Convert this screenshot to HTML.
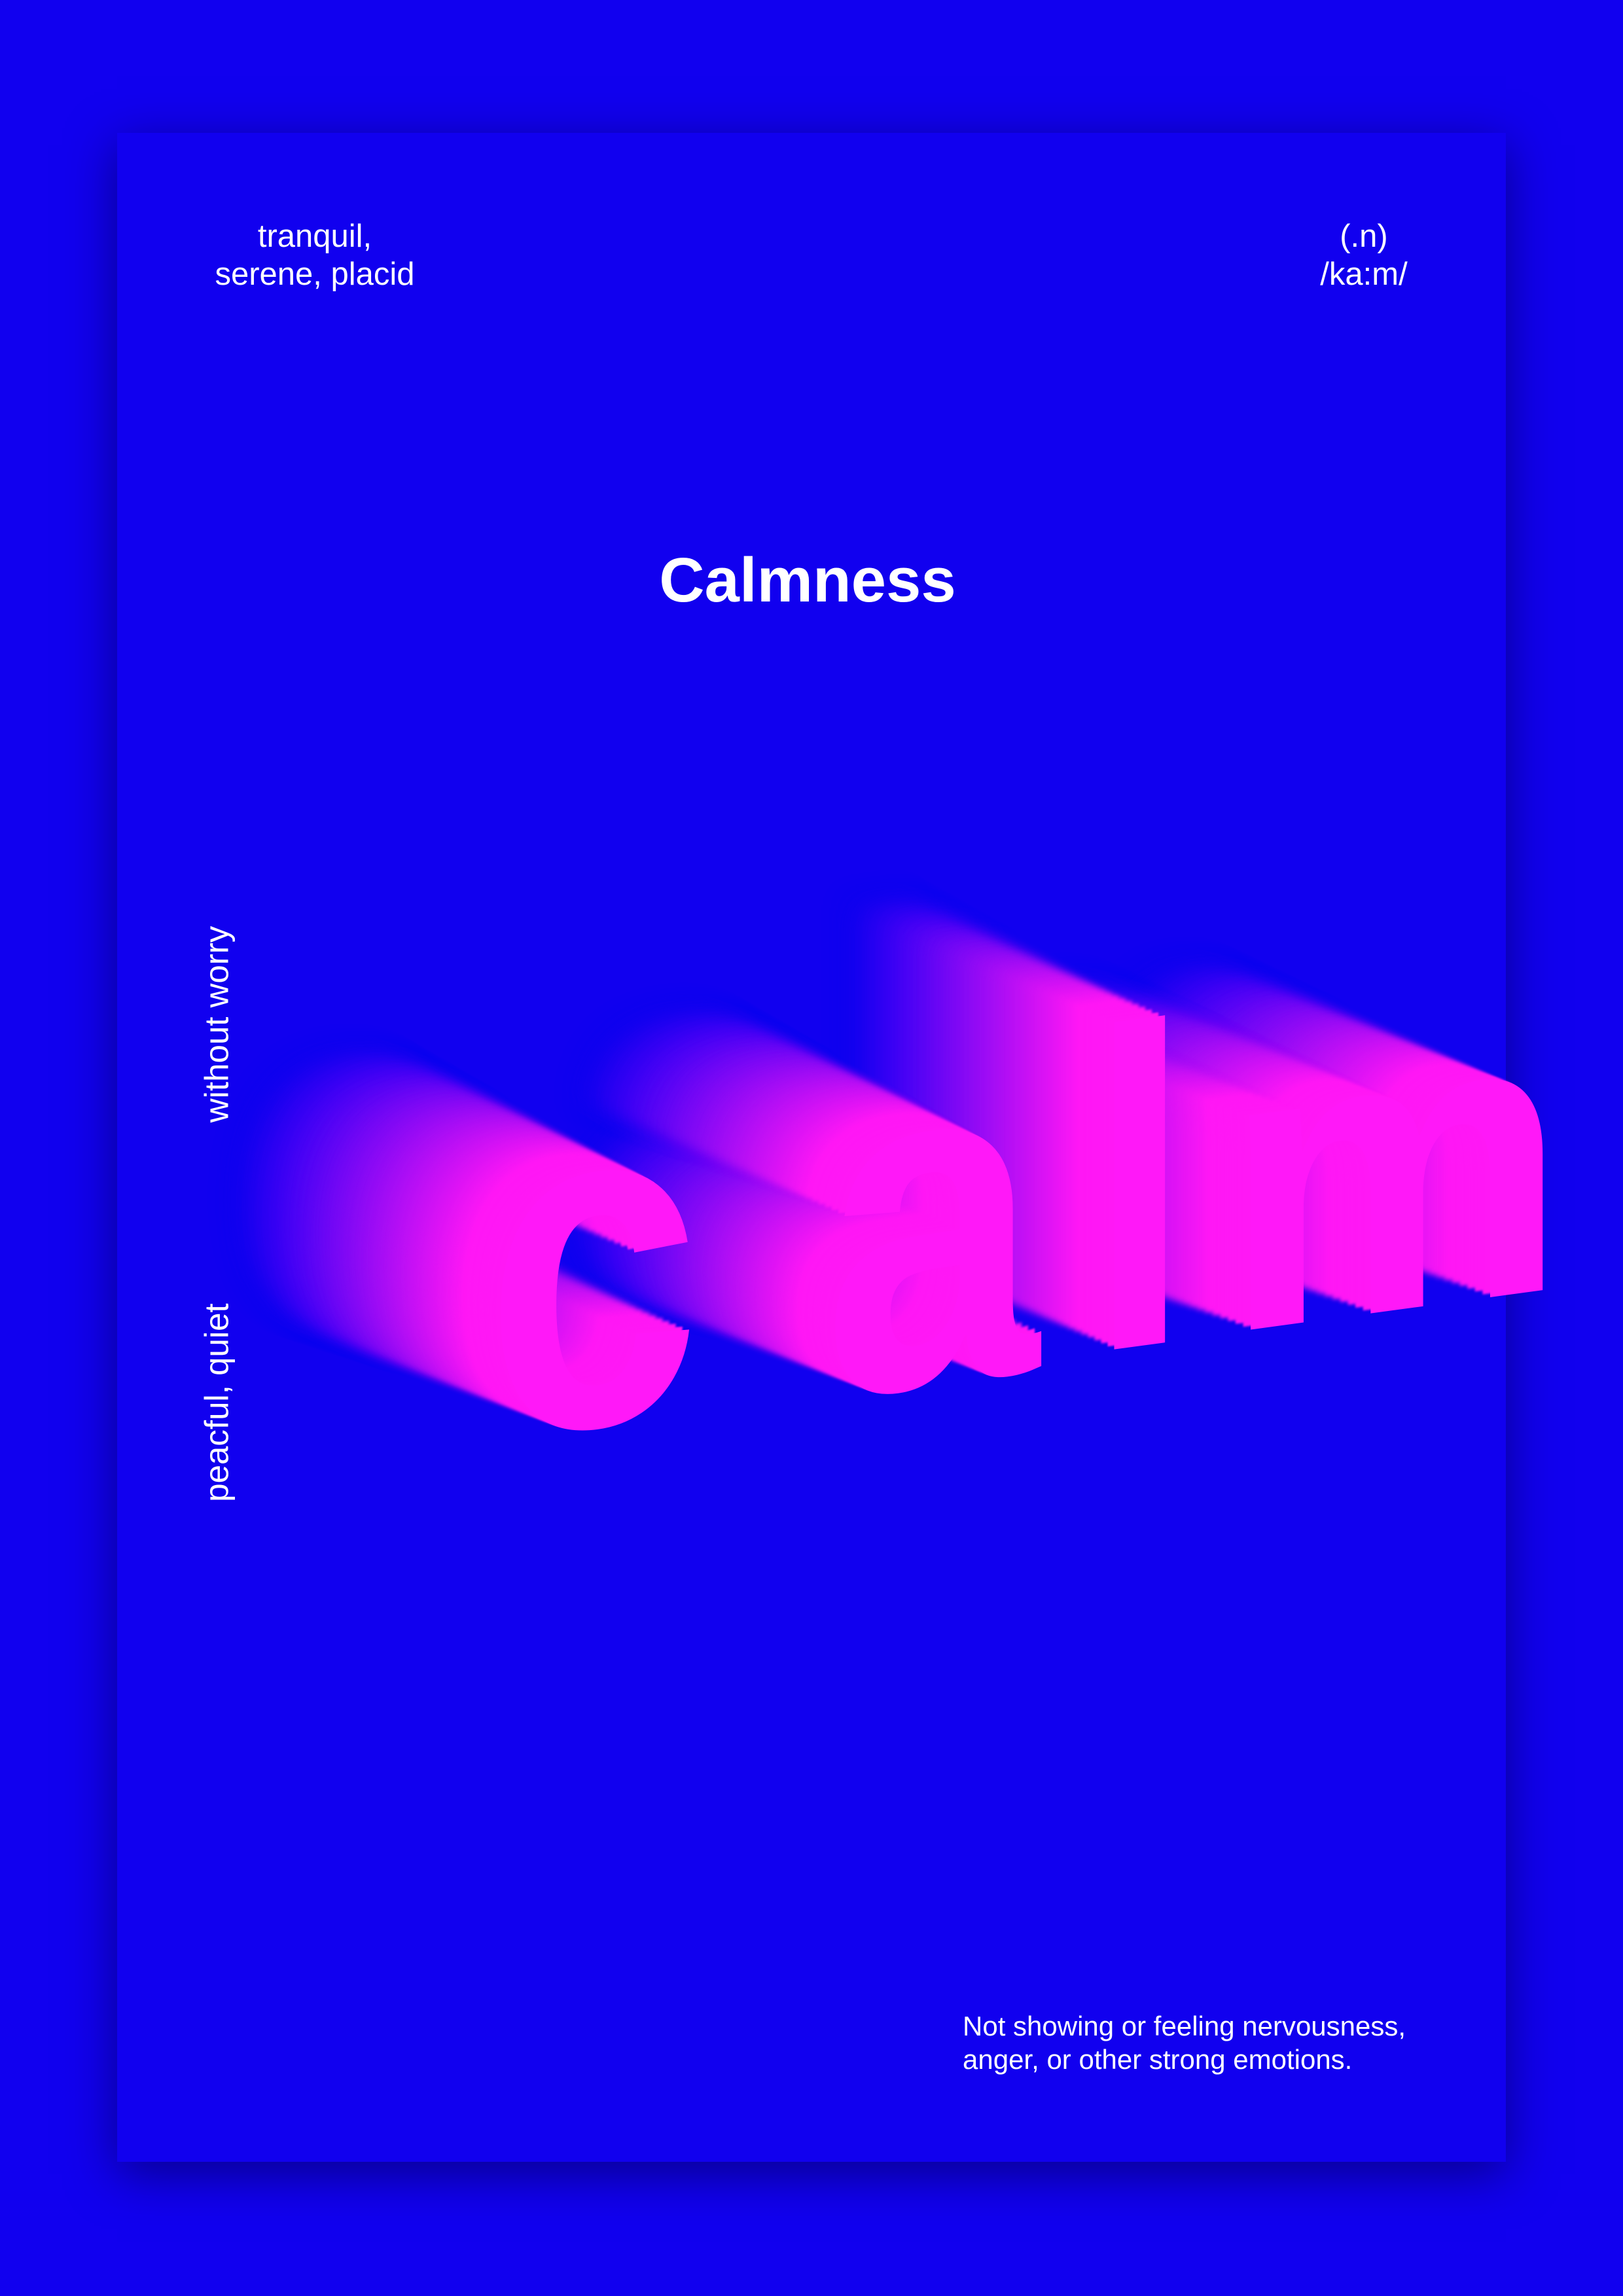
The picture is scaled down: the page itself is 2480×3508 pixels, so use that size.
<!DOCTYPE html>
<html><head><meta charset="utf-8"><style>
html,body{margin:0;padding:0}
body{width:2480px;height:3508px;background:#1100ef;position:relative;overflow:hidden;font-family:"Liberation Sans",sans-serif;color:#fff}
.card{position:absolute;left:179px;top:203px;width:2122px;height:3100px;background:#1100ef;box-shadow:0 18px 70px rgba(0,0,60,0.55)}
.t{position:absolute;white-space:nowrap}
.c2{text-align:center;transform:translateX(-50%)}
.rot{transform:translate(-50%,-50%) rotate(-90deg);font-size:51px}
.L{position:absolute;font-weight:bold;font-size:720px;line-height:1;color:#ff18f8;transform-origin:0 609px;transform:skewY(-7.7deg) scaleX(0.82);
text-shadow:
-12.2px -5.8px 3px rgb(255,24,245),-24.5px -11.7px 4px rgb(255,24,245),-36.7px -17.5px 5px rgb(255,24,245),-49px -23.3px 6px rgb(255,24,245),-61.2px -29.1px 7px rgb(255,24,245),-73.5px -35px 8px rgb(255,24,245),
-85.7px -40.8px 9px rgb(248,23,245),-98px -46.6px 10px rgb(241,23,245),-110.2px -52.5px 11px rgb(234,22,245),-122.5px -58.3px 12px rgb(227,21,245),
-134.7px -64.1px 13px rgb(220,20,245),-147px -70px 14px rgb(213,20,245),-159.2px -75.8px 15px rgb(206,19,245),-171.5px -81.6px 16px rgb(199,18,245),
-183.7px -87.4px 17px rgb(192,18,245),-196px -93.3px 18px rgb(185,17,245),-208.2px -99.1px 19px rgb(178,16,245),-220.5px -104.9px 20px rgb(171,16,245),
-232.7px -110.8px 21px rgb(164,15,245),-245px -116.6px 22px rgb(157,14,245),-257.2px -122.4px 23px rgb(150,13,245),-269.5px -128.3px 24px rgb(143,13,245),
-281.7px -134.1px 25px rgb(136,12,245),-294px -139.9px 26px rgb(129,11,245),-306.2px -145.7px 27px rgb(122,11,245),-318.5px -151.6px 28px rgb(115,10,245),
-330.7px -157.4px 29px rgb(108,9,245),-343px -163.2px 30px rgb(101,8,245),-355.2px -169.1px 31px rgb(94,8,245),-367.5px -174.9px 32px rgb(87,7,245),
-379.7px -180.7px 33px rgb(80,6,245),-392px -186.6px 34px rgb(73,6,245),-404.2px -192.4px 35px rgb(66,5,245),-416.5px -198.2px 36px rgb(59,4,244),
-428.7px -204px 37px rgb(52,4,243),-441px -209.9px 38px rgb(45,3,242),-453.2px -215.7px 39px rgb(38,2,241),-465.5px -221.5px 40px rgb(31,2,240),
-477.7px -227.4px 41px rgb(24,1,239),-490px -233.2px 42px rgb(18,0,239);}
</style></head><body>
<div class="card"></div>

<div class="t c2" style="left:481px;top:332px;font-size:49px;line-height:58px">tranquil,<br>serene, placid</div>
<div class="t c2" style="left:2084px;top:332px;font-size:49px;line-height:58px">(.n)<br>/ka:m/</div>
<div class="t c2" style="left:1234px;top:827px;font-size:96px;font-weight:bold;line-height:120px">Calmness</div>

<div class="t rot" style="left:331px;top:1565px">without worry</div>
<div class="t rot" style="left:331px;top:2143px">peacful, quiet</div>

<div class="L" style="left:1870px;top:1513px;font-size:620px;transform-origin:0 525px;transform:skewY(-7.7deg) scaleX(0.95)">m</div>
<div class="L" style="left:1663px;top:1484px;font-size:690px;transform-origin:0 584px">l</div>
<div class="L" style="left:1259px;top:1528px">a</div>
<div class="L" style="left:742px;top:1591px">c</div>

<div class="t" style="left:1471px;top:3070px;font-size:42px;line-height:51px">Not showing or feeling nervousness,<br>anger, or other strong emotions.</div>
</body></html>
